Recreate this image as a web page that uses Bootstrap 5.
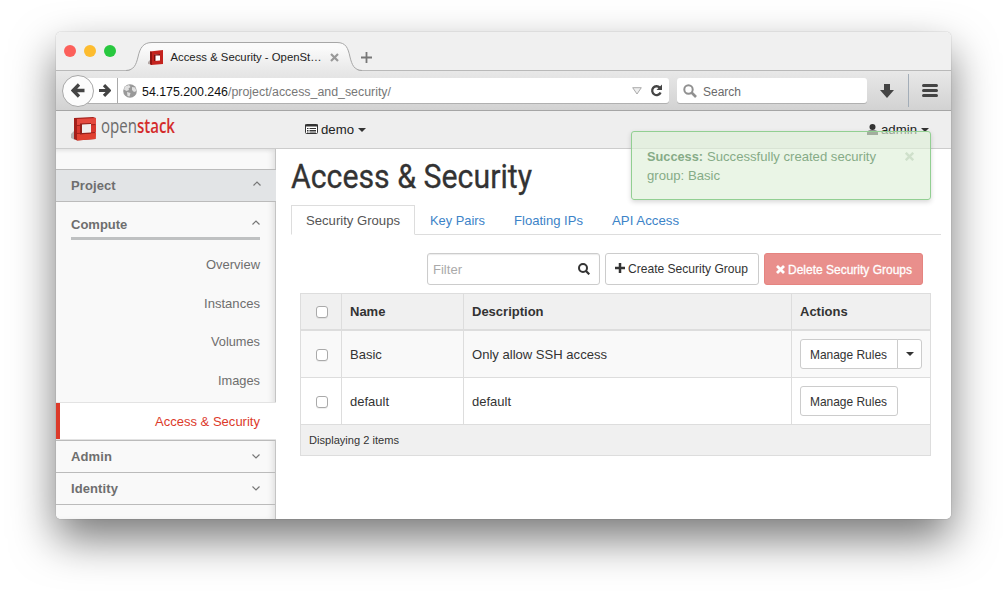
<!DOCTYPE html>
<html lang="en">
<head>
<meta charset="utf-8">
<meta name="viewport" content="width=device-width, initial-scale=1">
<title>Access &amp; Security - OpenStack Dashboard</title>
<link rel="stylesheet" href="https://cdn.jsdelivr.net/npm/bootstrap@5.3.0/dist/css/bootstrap.min.css">
<style>
  body { font-family: "Liberation Sans", Arial, sans-serif; font-size: 13px; line-height: 19px; color: #333; background: #fff; height: 599px; overflow: hidden; padding: 32px 56px 0; }
  svg { display: block; flex: none; }
  .fit { display: block; overflow: visible; }
  .win { width: 895px; height: 487px; border-radius: 5px; overflow: hidden; background: #fff; }
  .win-shadow { width: 895px; height: 487px; border-radius: 5px; box-shadow: 0 0 1px rgba(0,0,0,.5), 0 20px 44px rgba(0,0,0,.53); }
  /* browser chrome */
  .tabstrip { height: 39px; background: #f0f0f0; border-bottom: 1px solid #b9b9b9; padding-left: 8px; }
  .light { width: 12px; height: 12px; border-radius: 50%; }
  .page-tab { width: 240px; height: 39px; margin-left: 10px; color: #222; font-size: 11.5px; }
  .page-tab > .shape { position: absolute; left: 0; top: 0; }
  .toolbar { height: 40px; background: linear-gradient(#e8e8e8, #d2d2d2); border-bottom: 1px solid #a5a5a5; padding: 0 0 0 6px; }
  .back { width: 32px; height: 32px; border-radius: 50%; background: #fcfcfc; border: 1px solid #a8a8a8; z-index: 2; }
  .fieldbox { height: 25px; background: #fff; border-radius: 0 3px 3px 0; box-shadow: 0 1px 0 #b0b0b0; flex: none; }
  .urlbox { width: 593px; margin-left: -18px; padding-left: 23px; }
  .findbox { width: 190px; border-radius: 3px; margin-left: 8px; padding-left: 6px; }
  .vline { width: 1px; height: 33px; background: #a3adb8; }
  /* dashboard header */
  .apphead { height: 38px; background: #eee; border-bottom: 1px solid #ccc; padding: 0 22px 1px 15px; }
  .caret { width: 0; height: 0; border: 4px solid transparent; border-top-color: #333; border-bottom: 0; }
  /* sidebar */
  .side { width: 220px; background: #f9f9f9; border-right: 1px solid #c4c4c4; box-shadow: inset -5px 0 6px -3px #ddd, inset 0 4px 4px -3px #ddd; color: #6e6e6e; padding-top: 20px; font-size: 13px; }
  .side-h { height: 32px; font-weight: bold; border-bottom: 1px solid #bbb; padding: 0 15px; letter-spacing: .1px; }
  .side-h.open { height: 33px; background: #e2e4e6; border-top: 1px solid #bbb; margin-right: -1px; }
  .compute { height: 38px; margin: 0 15px; font-weight: bold; border-bottom: 3px solid #bfc1c2; padding-top: 10px; }
  .side-list { padding-top: 5px; height: 162px; }
  .side-i { height: 38.6px; padding-right: 15px; }
  .side-i.on { height: 38px; margin-right: -1px; padding-right: 16px; background: #fff; border-top: 1px solid #e3e3e3; border-bottom: 1px solid #e3e3e3; box-shadow: inset 4px 0 #dc3a2a; }
  .side-h.first { height: 33px; border-top: 1px solid #bbb; }
  /* content */
  .content { padding: 0 10px 0 15px; }
  .nav-tabs { --bs-nav-tabs-border-color: #ddd; --bs-nav-tabs-border-radius: 0; height: 30px; width: 650px; margin-top: 7px; }
  .nav-tabs .nav-link { padding: 4px 14px 5px; height: 30px; line-height: 19px; }
  .nav-tabs .nav-link.active { border-color: #ddd #ddd #fff; }
  .actions { margin: 18px 18px 8px 0; gap: 5px; }
  .obtn { background: #fff; border: 1px solid #ccc; border-radius: 3px; color: #333; font-size: 13px; line-height: 18px; height: 32px; padding: 0; }
  .filter { width: 173px; padding: 0 9px 0 5px; box-shadow: inset 0 1px 1px rgba(0,0,0,.08); }
  .create { width: 154px; padding: 0 2px 2px 0; }
  .del { width: 159px; height: 32px; background: #e98f8c; border: 1px solid #e58480; border-radius: 3px; color: #fff; padding: 0; font-size: 13px; }
  .sg { width: 631px; table-layout: fixed; margin: 0 0 0 9px; border-collapse: separate; border-spacing: 0; border: 1px solid #ddd; border-right: 0; color: #333; font-size: 13px; }
  .sg th, .sg td { padding: 0 8px; border: 0; border-right: 1px solid #ddd; border-bottom: 1px solid #ddd; vertical-align: middle; box-shadow: none; }
  .sg thead tr { height: 37px; } .sg thead th { background: #f0f0f0; border-bottom-width: 2px; }
  .sg tbody tr { height: 47px; } .sg .odd td { background: #f9f9f9; }
  .sg tfoot td { background: #f0f0f0; height: 30px; border-bottom: 0; font-size: 11px; }
  .cbx { width: 12px; height: 12px; border: 1px solid #aaa; border-radius: 3px; background: #fff; margin: 1px auto 0 15px; box-shadow: 0 1px 0 rgba(0,0,0,.06); }
  .rules { height: 30px; width: 98px; padding-right: 1px; }
  .rules-dd { height: 30px; width: 25px; margin-left: -1px; border-radius: 0 3px 3px 0; }
  .toast-ok { position: absolute; left: 575px; top: 99px; width: 300px; height: 69px; background: rgba(223,240,216,.65); border: 1px solid #92cf92; border-radius: 3px; box-shadow: 0 2px 5px rgba(0,0,0,.16); padding: 15px; z-index: 5; }
</style>
</head>
<body>
<div class="win-shadow position-relative">
<div class="win d-flex flex-column">
  <div class="tabstrip d-flex align-items-center flex-shrink-0">
    <div class="d-flex gap-2">
      <span class="light" style="background:#fc605b"></span><span class="light" style="background:#fdbc2f"></span><span class="light" style="background:#28c83f"></span>
    </div>
    <div class="page-tab position-relative d-flex align-items-center">
      <svg class="shape" width="240" height="39" viewBox="0 0 240 39"><defs><linearGradient id="tg" x1="0" y1="0" x2="0" y2="1"><stop offset="0.2" stop-color="#fafafa"/><stop offset="1" stop-color="#e8e8e8"/></linearGradient></defs><path d="M0 39.500C8 38 10 33 12 25C14 16 17 10.500 26 10.500H211C220 10.500 222 16 224 25C226 33 228 38 236 39.500Z" fill="url(#tg)"/><path d="M0 38.500C8 38 10 33 12 25C14 16 17 10.500 26 10.500H211C220 10.500 222 16 224 25C226 33 228 38 236 38.500" fill="none" stroke="#a6a6a6"/></svg>
      <div class="position-relative d-flex align-items-center w-100 pt-2 mt-1">
        <svg width="16" height="15" viewBox="0 0 16 15" style="margin-left:22px"><path d="M0 12L3 9V14.500L0 14Z" fill="#b5aaa8"/><path d="M2 1.500L15 0V14L3 15L2 14Z" fill="#c4231e"/><path d="M2 1.500L4 2V15L2 14Z" fill="#8f1512"/><path d="M6.500 4.500L12 4V10.500L6.500 11Z" fill="#fff"/><path d="M6 4.500L12 4V5.500H7.500V11H6Z" fill="#7c0d0d"/></svg>
        <svg class="fit" width="151" height="16" style="margin-left:6px"><text x="0.500" y="12" font-size="11.500" fill="#222" textLength="151" lengthAdjust="spacingAndGlyphs">Access &amp; Security - OpenSt…</text></svg>
        <svg width="9" height="9" viewBox="0 0 9 9" style="margin-left:9px"><path d="M1 1L8 8M8 1L1 8" stroke="#999" stroke-width="2.200"/></svg>
      </div>
    </div>
    <svg width="11" height="11" viewBox="0 0 11 11" style="margin:13px 0 0 -5px"><path d="M5.500 0V11M0 5.500H11" stroke="#777" stroke-width="1.800"/></svg>
  </div>

  <div class="toolbar d-flex align-items-center flex-shrink-0">
    <div class="back d-flex align-items-center justify-content-center flex-shrink-0 position-relative"><svg width="14" height="15" viewBox="0 0 14 15"><path d="M13.500 7.500H2.500M8 1.500L2 7.500L8 13.500" fill="none" stroke="#444" stroke-width="3.300"/></svg></div>
    <div class="fieldbox urlbox d-flex align-items-center position-relative">
      <svg width="12" height="13" viewBox="0 0 12 13"><path d="M0 6.500H9.500M5 1.200L10.300 6.500L5 11.800" fill="none" stroke="#444" stroke-width="3.200"/></svg>
      <span class="vline" style="height:25px;margin-left:6px;background:#aaa"></span>
      <svg width="14" height="14" viewBox="0 0 14 14" style="margin-left:5px"><circle cx="7" cy="7" r="6.800" fill="#999"/><path d="M2 2.500L6 1L7.500 3L5.500 4.500L6 6L3.500 7L1 5.500ZM9 3L12 3.500L13.500 7L11 8L9 6ZM4 8L7.500 9L6.500 12.500L4.500 12Z" fill="#e0e0e0"/></svg>
      <svg class="fit" width="249" height="18" style="margin-left:5px"><text y="13.500" font-size="12.500" fill="#777" textLength="249" lengthAdjust="spacingAndGlyphs"><tspan fill="#111">54.175.200.246</tspan>/project/access_and_security/</text></svg>
      <svg width="10" height="8" viewBox="0 0 10 8" style="margin-left:241px"><path d="M.7.700H9.300L5 7Z" fill="#eee" stroke="#aaa"/></svg>
      <svg width="13" height="13" viewBox="0 0 13 13" style="margin-left:8px"><path d="M9.800 3.600A4.400 4.400 0 1 0 10.600 8.500" fill="none" stroke="#444" stroke-width="2.300"/><path d="M12 .500V6H6.500Z" fill="#444"/></svg>
    </div>
    <div class="fieldbox findbox d-flex align-items-center">
      <svg width="14" height="14" viewBox="0 0 14 14"><circle cx="5.500" cy="5.500" r="4.200" fill="none" stroke="#909090" stroke-width="2"/><path d="M8.500 8.500L13 13" stroke="#909090" stroke-width="2.600"/></svg>
      <svg class="fit" width="38" height="18" style="margin-left:6px"><text y="13.500" font-size="12.500" fill="#6a6a6a" textLength="38" lengthAdjust="spacingAndGlyphs">Search</text></svg>
    </div>
    <svg width="14" height="14" viewBox="0 0 14 14" style="margin-left:13px"><path d="M4 0H10V6H14L7 14L0 6H4Z" fill="#444"/></svg>
    <span class="vline" style="margin-left:14px"></span>
    <svg width="16" height="13" viewBox="0 0 16 13" style="margin-left:13px"><path d="M1.500 1.500H14.500M1.500 6.500H14.500M1.500 11.500H14.500" stroke="#444" stroke-width="3" stroke-linecap="round"/></svg>
  </div>

  <div class="apphead d-flex align-items-center flex-shrink-0">
    <svg width="26" height="25" viewBox="0 0 26 25" style="margin-top:-2px"><path d="M0 18L4 14V24L0 22Z" fill="#b3b3b3"/><path d="M3 2L22 1L25 2L24.500 23L6 24.500L3 23Z" fill="#a3201b"/><path d="M6 3L25 2V8L6 9Z" fill="#e5493f"/><path d="M6 10L25 9V16L6 17Z" fill="#d8382f"/><path d="M6 18L25 17L24.500 23L6 24.500Z" fill="#e04030"/><path d="M9 7.500L20 7V17.500L9 18.500Z" fill="#93201b"/><path d="M11 8.500L20 8V16.500L11 17Z" fill="#f0eeee"/></svg>
    <svg class="fit" width="74" height="26" style="margin:-7px 0 0 4px" font-family="Open Sans, sans-serif"><text y="20" font-size="20" fill="#6b6b6b" textLength="74" lengthAdjust="spacingAndGlyphs">open<tspan font-weight="600" fill="#d42b2b">stack</tspan></text></svg>
    <svg width="13" height="10" viewBox="0 0 13 10" style="margin-left:130px"><rect x=".5" y=".5" width="12" height="9" rx="1" fill="#fff" stroke="#333"/><path d="M0 1.500H13" stroke="#333" stroke-width="2"/><path d="M2 4.500H3.500M4.500 4.500H11M2 6.500H3.500M4.500 6.500H11M2 8H3.500M4.500 8H11" stroke="#333"/></svg>
    <svg class="fit" width="33" height="18" style="margin-left:3px"><text y="13.500" font-size="13" fill="#222" textLength="33" lengthAdjust="spacingAndGlyphs">demo</text></svg>
    <span class="caret" style="margin:2px auto 0 4px"></span>
    <svg width="11" height="11" viewBox="0 0 11 11"><circle cx="5.500" cy="3" r="3" fill="#333"/><path d="M0 11V8.500Q0 6.500 3 6.500H8Q11 6.500 11 8.500V11Z" fill="#333"/></svg>
    <svg class="fit" width="36" height="18" style="margin-left:3px"><text y="13.500" font-size="13" fill="#222" textLength="36" lengthAdjust="spacingAndGlyphs">admin</text></svg>
    <span class="caret" style="margin:2px 0 0 4px"></span>
  </div>

  <div class="d-flex flex-grow-1">
    <nav class="side flex-shrink-0">
      <div class="side-h open d-flex align-items-center justify-content-between"><span>Project</span><svg width="8" height="5" viewBox="0 0 8 5" style="margin-top:-5px"><path d="M.5 4.500L4 1L7.500 4.500" fill="none" stroke="#777" stroke-width="1.200"/></svg></div>
      <div class="compute d-flex align-items-center justify-content-between"><span>Compute</span><svg width="8" height="5" viewBox="0 0 8 5" style="margin-top:-5px"><path d="M.5 4.500L4 1L7.500 4.500" fill="none" stroke="#777" stroke-width="1.200"/></svg></div>
      <div class="side-list">
        <div class="side-i d-flex align-items-center justify-content-end"><svg class="fit" width="54" height="18"><text y="13.500" font-size="13" fill="#6e6e6e" textLength="54" lengthAdjust="spacingAndGlyphs">Overview</text></svg></div>
        <div class="side-i d-flex align-items-center justify-content-end"><svg class="fit" width="56" height="18"><text y="13.500" font-size="13" fill="#6e6e6e" textLength="56" lengthAdjust="spacingAndGlyphs">Instances</text></svg></div>
        <div class="side-i d-flex align-items-center justify-content-end"><svg class="fit" width="49" height="18"><text y="13.500" font-size="13" fill="#6e6e6e" textLength="49" lengthAdjust="spacingAndGlyphs">Volumes</text></svg></div>
        <div class="side-i d-flex align-items-center justify-content-end"><svg class="fit" width="42" height="18"><text y="13.500" font-size="13" fill="#6e6e6e" textLength="42" lengthAdjust="spacingAndGlyphs">Images</text></svg></div>
      </div>
      <div class="side-i on d-flex align-items-center justify-content-end"><svg class="fit" width="105" height="18"><text y="13.500" font-size="13" fill="#dc3a2a" textLength="105" lengthAdjust="spacingAndGlyphs">Access &amp; Security</text></svg></div>
      <div class="side-h first d-flex align-items-center justify-content-between"><span>Admin</span><svg width="8" height="5" viewBox="0 0 8 5"><path d="M.5.500L4 4L7.500.500" fill="none" stroke="#777" stroke-width="1.200"/></svg></div>
      <div class="side-h d-flex align-items-center justify-content-between"><span>Identity</span><svg width="8" height="5" viewBox="0 0 8 5"><path d="M.5.500L4 4L7.500.500" fill="none" stroke="#777" stroke-width="1.200"/></svg></div>
    </nav>

    <main class="content flex-grow-1">
      <h1 class="m-0 fw-normal" style="height:49px"><svg class="fit" width="241" height="49" font-family="Roboto, sans-serif"><text y="39" font-size="33" fill="#333" stroke="#333" stroke-width=".3" textLength="241" lengthAdjust="spacingAndGlyphs">Access &amp; Security</text></svg></h1>
      <ul class="nav nav-tabs flex-nowrap">
        <li class="nav-item"><a class="nav-link active" href="#"><svg class="fit" width="94" height="19"><text y="14.500" font-size="13" fill="#555" textLength="94" lengthAdjust="spacingAndGlyphs">Security Groups</text></svg></a></li>
        <li class="nav-item"><a class="nav-link" href="#"><svg class="fit" width="54" height="19"><text y="14.500" font-size="13" fill="#3c83c8" textLength="55" lengthAdjust="spacingAndGlyphs">Key Pairs</text></svg></a></li>
        <li class="nav-item"><a class="nav-link" href="#"><svg class="fit" width="68" height="19"><text y="14.500" font-size="13" fill="#3c83c8" textLength="69" lengthAdjust="spacingAndGlyphs">Floating IPs</text></svg></a></li>
        <li class="nav-item"><a class="nav-link" href="#"><svg class="fit" width="67" height="19"><text y="14.500" font-size="13" fill="#3c83c8" textLength="67" lengthAdjust="spacingAndGlyphs">API Access</text></svg></a></li>
      </ul>
      <div class="actions d-flex justify-content-end">
        <div class="obtn filter d-flex align-items-center justify-content-between"><svg class="fit" width="29" height="18"><text y="13.500" font-size="13" fill="#aaa" textLength="29" lengthAdjust="spacingAndGlyphs">Filter</text></svg><svg width="12" height="12" viewBox="0 0 12 12"><circle cx="5" cy="5" r="4" fill="none" stroke="#333" stroke-width="2"/><path d="M8 8L11.300 11.300" stroke="#333" stroke-width="2.200"/></svg></div>
        <button class="btn obtn create d-flex align-items-center justify-content-center"><svg width="10" height="10" viewBox="0 0 10 10"><path d="M5 0V10M0 5H10" stroke="#333" stroke-width="2.500"/></svg><svg class="fit" width="120" height="18" style="margin-left:3px"><text y="13.500" font-size="13" fill="#333" textLength="120" lengthAdjust="spacingAndGlyphs">Create Security Group</text></svg></button>
        <button class="btn del d-flex align-items-center justify-content-center"><svg width="9" height="9" viewBox="0 0 9 9"><path d="M1 1L8 8M8 1L1 8" stroke="#fff" stroke-width="2.800"/></svg><svg class="fit" width="124" height="18" style="margin-left:3px"><text y="13.500" font-size="13" fill="#fff" stroke="#fff" stroke-width=".3" textLength="124" lengthAdjust="spacingAndGlyphs">Delete Security Groups</text></svg></button>
      </div>
      <table class="table sg">
        <colgroup><col style="width:41px"><col style="width:122px"><col style="width:328px"><col style="width:139px"></colgroup>
        <thead><tr><th class="p-0"><div class="cbx"></div></th><th>Name</th><th>Description</th><th>Actions</th></tr></thead>
        <tbody>
          <tr class="odd"><td class="p-0"><div class="cbx"></div></td><td>Basic</td><td><svg class="fit" width="135" height="18"><text y="13.500" font-size="13" fill="#333" textLength="135" lengthAdjust="spacingAndGlyphs">Only allow SSH access</text></svg></td>
            <td><div class="btn-group"><button class="btn obtn rules d-flex align-items-center justify-content-center"><svg class="fit" width="77" height="18"><text y="13.500" font-size="13" fill="#333" textLength="77" lengthAdjust="spacingAndGlyphs">Manage Rules</text></svg></button><button class="btn obtn rules-dd d-flex align-items-center justify-content-center"><span class="caret"></span></button></div></td></tr>
          <tr><td class="p-0"><div class="cbx"></div></td><td>default</td><td>default</td>
            <td><button class="btn obtn rules d-flex align-items-center justify-content-center"><svg class="fit" width="77" height="18"><text y="13.500" font-size="13" fill="#333" textLength="77" lengthAdjust="spacingAndGlyphs">Manage Rules</text></svg></button></td></tr>
        </tbody>
        <tfoot><tr><td colspan="4"><svg class="fit" width="90" height="16"><text y="12" font-size="11" fill="#333" textLength="90" lengthAdjust="spacingAndGlyphs">Displaying 2 items</text></svg></td></tr></tfoot>
      </table>
    </main>
  </div>
</div>
<div class="toast-ok d-flex justify-content-between" role="alert">
  <svg class="fit" width="229" height="38"><text y="14" font-size="13" font-weight="bold" fill="#86ab87" textLength="56" lengthAdjust="spacingAndGlyphs">Success:</text><text x="60" y="14" font-size="13" fill="#86ab87" textLength="169" lengthAdjust="spacingAndGlyphs">Successfully created security</text><text y="33" font-size="13" fill="#86ab87" textLength="73" lengthAdjust="spacingAndGlyphs">group: Basic</text></svg>
  <svg width="9" height="9" viewBox="0 0 9 9" style="margin:5px 1px 0 0"><path d="M.8.800L8.200 8.200M8.200.800L.8 8.200" stroke="#cfe0cb" stroke-width="2.400"/></svg>
</div>
</div>
<script src="https://cdn.jsdelivr.net/npm/bootstrap@5.3.0/dist/js/bootstrap.bundle.min.js"></script>
</body>
</html>
